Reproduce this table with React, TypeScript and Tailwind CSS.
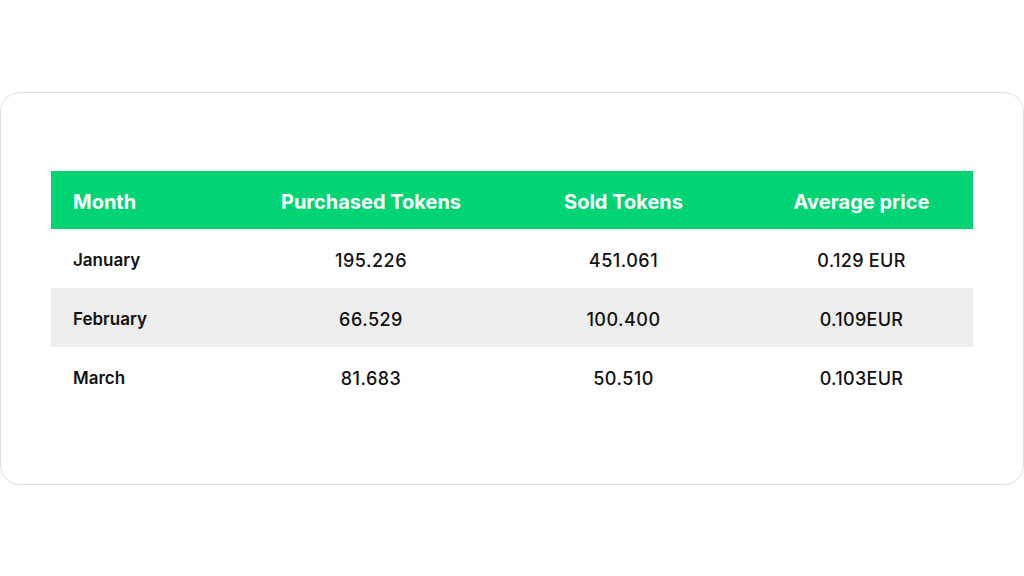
const rows = [
  { month: 'January', purchased: '195.226', sold: '451.061', price: '0.129 EUR' },
  { month: 'February', purchased: '66.529', sold: '100.400', price: '0.109EUR' },
  { month: 'March', purchased: '81.683', sold: '50.510', price: '0.103EUR' },
];

const cols = 'grid grid-cols-[194px_252px_253px_223px]';

export default function App() {
  return (
    <div className="h-[576px] w-[1024px] bg-white pt-[92px] font-['Inter',sans-serif]">
      <div className="h-[393px] w-[1024px] rounded-[20px] border border-[#dedede] bg-white px-[50px] pt-[78px]">
        <div className={`${cols} h-[58px] items-center bg-[#00d474] pt-1 text-[20px] font-bold text-white`}>
          <div className="pl-[22px]">Month</div>
          <div className="text-center">Purchased Tokens</div>
          <div className="text-center">Sold Tokens</div>
          <div className="text-center">Average price</div>
        </div>
        {rows.map((r, i) => (
          <div
            key={r.month}
            className={`${cols} h-[59px] items-center pt-1 text-[#111] ${i === 1 ? 'bg-[#eeeeee]' : 'bg-white'}`}
          >
            <div className="pl-[22px] text-[17px] font-semibold">{r.month}</div>
            <div className="text-center text-[18px] font-medium tracking-[0.5px]">{r.purchased}</div>
            <div className="text-center text-[18px] font-medium tracking-[0.5px]">{r.sold}</div>
            <div className="text-center text-[18px] font-medium tracking-[0.3px]">{r.price}</div>
          </div>
        ))}
      </div>
    </div>
  );
}
